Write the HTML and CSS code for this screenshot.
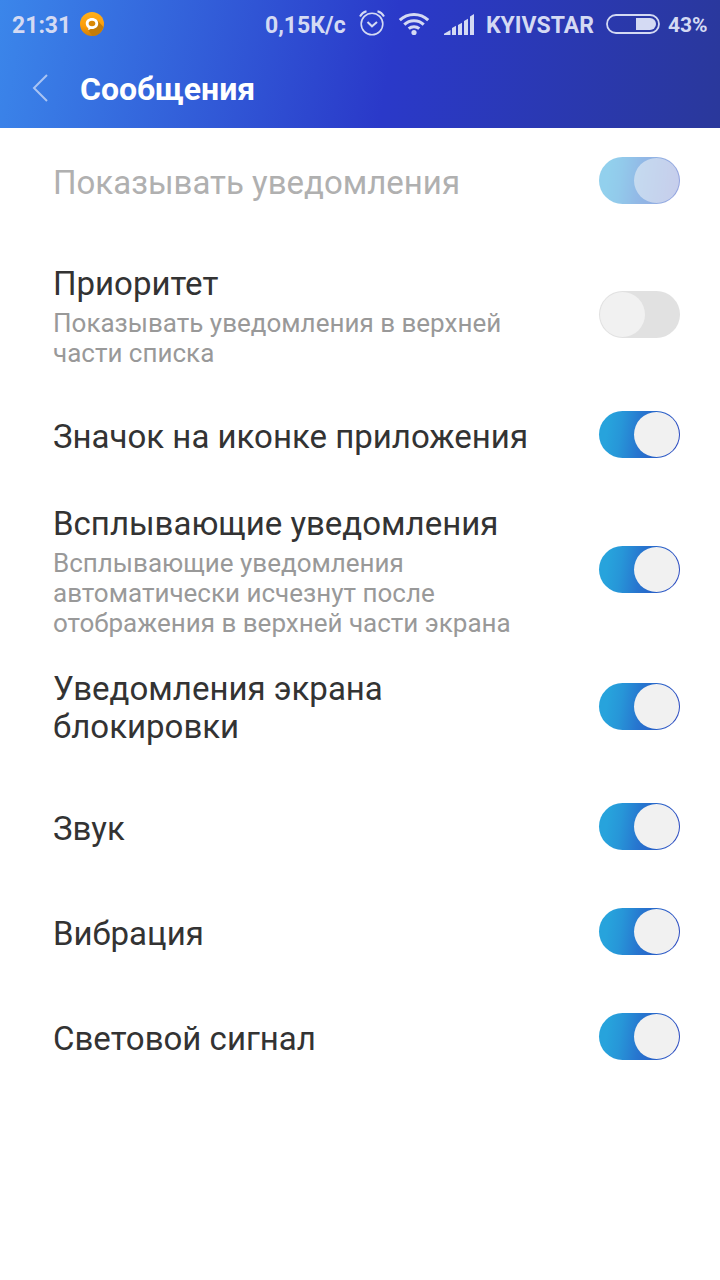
FILE: index.html
```html
<!DOCTYPE html>
<html lang="ru">
<head>
<meta charset="utf-8">
<title>Сообщения</title>
<link rel="stylesheet" href="styles.css">
</head>
<body>
<header class="header">
    <div class="status-bar">
        <span class="time">21:31</span>
        <svg class="app-icon" width="24" height="24" viewBox="0 0 24 24">
            <defs>
                <linearGradient id="orange" x1="0" y1="0" x2="0" y2="1">
                    <stop offset="0" stop-color="#ffb01c"/>
                    <stop offset="0.6" stop-color="#fb9c0a"/>
                    <stop offset="1" stop-color="#d07f06"/>
                </linearGradient>
            </defs>
            <circle cx="12" cy="12" r="12" fill="url(#orange)"/>
            <path d="M17 8l6.500 7a12 12 0 0 1-11 9L8 18z" fill="#c47c08"/>
            <path d="M12 6c3.600 0 6.200 2.300 6.200 5.500S15.600 17 12 17h-1.500L8.300 18.300V16C6.600 15 5.800 13.400 5.800 11.500 5.800 8.300 8.400 6 12 6z" fill="#fff"/>
            <ellipse cx="12" cy="11.500" rx="3.300" ry="2.700" fill="#d98807"/>
        </svg>
        <span class="speed">0,15К/с</span>
        <svg class="alarm" width="26" height="26" viewBox="0 0 26 26" fill="none" stroke="#d4daf3">
            <circle cx="13" cy="14" r="10.800" stroke-width="1.600"/>
            <path d="M8.500 12l4.500 4.300 5-4.300" stroke-width="2"/>
            <path d="M1 6.500C2.300 4 4.500 2 7.500 1.200M25 6.500C23.700 4 21.500 2 18.500 1.200" stroke-width="2"/>
        </svg>
        <svg class="wifi" width="32" height="24" viewBox="0 0 32 24" fill="none" stroke="#d4daf3" stroke-width="3">
            <path d="M1.800 8.200a20.500 20.500 0 0 1 28.400 0"/>
            <path d="M6.300 12.700a14 14 0 0 1 19.400 0"/>
            <path d="M10.700 16.700a8 8 0 0 1 10.600 0"/>
            <circle cx="16" cy="20.500" r="2.600" fill="#d4daf3" stroke="none"/>
        </svg>
        <svg class="signal" width="30" height="21" viewBox="0 0 30 21" fill="#d4daf3">
            <path d="M0 21v-1.200L6.500 16v5zM8 21v-7l4-2.200V21zM14 21v-10l4-2.200V21zM20 21V7l4-2.300V21zM26 21V2.500L30 0v21z"/>
        </svg>
        <span class="carrier">KYIVSTAR</span>
        <svg class="battery" width="54" height="20" viewBox="0 0 54 20">
            <rect x="1" y="1" width="52" height="18" rx="9" fill="none" stroke="#d4daf3" stroke-width="1.800"/>
            <path d="M30 4h14a6 6 0 0 1 0 12H30z" fill="#d4daf3"/>
        </svg>
        <span class="percent">43%</span>
    </div>
    <div class="title-bar">
        <svg class="back" width="16" height="28" viewBox="0 0 16 28" fill="none" stroke="#a9c4f3" stroke-width="2">
            <path d="M15 1L2 14l13 13"/>
        </svg>
        <h1 class="title">Сообщения</h1>
    </div>
</header>

<main class="settings">
    <div class="row disabled">
        <div class="text"><div class="name">Показывать уведомления</div></div>
        <div class="toggle on"></div>
    </div>
    <div class="row priority">
        <div class="text">
            <div class="name">Приоритет</div>
            <div class="summary">Показывать уведомления в верхней<br>части списка</div>
        </div>
        <div class="toggle"></div>
    </div>
    <div class="row">
        <div class="text"><div class="name">Значок на иконке приложения</div></div>
        <div class="toggle on"></div>
    </div>
    <div class="row popup">
        <div class="text">
            <div class="name">Всплывающие уведомления</div>
            <div class="summary">Всплывающие уведомления<br>автоматически исчезнут после<br>отображения в верхней части экрана</div>
        </div>
        <div class="toggle on"></div>
    </div>
    <div class="row lockscreen">
        <div class="text"><div class="name">Уведомления экрана<br>блокировки</div></div>
        <div class="toggle on"></div>
    </div>
    <div class="row">
        <div class="text"><div class="name">Звук</div></div>
        <div class="toggle on"></div>
    </div>
    <div class="row">
        <div class="text"><div class="name">Вибрация</div></div>
        <div class="toggle on"></div>
    </div>
    <div class="row">
        <div class="text"><div class="name">Световой сигнал</div></div>
        <div class="toggle on"></div>
    </div>
</main>
</body>
</html>
```
FILE: styles.css
```css
* {
    margin: 0;
    padding: 0;
    box-sizing: border-box;
}

body {
    width: 720px;
    min-height: 1280px;
    background: #fff;
    font-family: Roboto, "Noto Sans", sans-serif;
    color: #333;
}

.header {
    height: 128px;
    background: linear-gradient(100deg, #3b86ea 0%, #2a39c9 54%, #2a389b 100%);
}

.status-bar {
    display: flex;
    align-items: center;
    height: 50px;
    padding: 0 12px;
    color: #d4daf3;
    font-size: 23px;
    font-weight: 700;
    white-space: nowrap;
}

.status-bar svg {
    flex: none;
}

.time {
    width: 68px;
}

.app-icon {
    margin-top: -2px;
}

.speed {
    width: 94px;
    margin-left: 161px;
}

.alarm {
    margin-top: -4px;
}

.wifi {
    margin-left: 13px;
    margin-top: -2px;
}

.signal {
    margin-left: 14px;
    margin-top: -1px;
}

.carrier {
    width: 120px;
    margin-left: 12px;
}

.battery {
    margin-top: -2px;
}

.percent {
    margin-left: 8px;
    font-size: 21px;
}

.title-bar {
    display: flex;
    align-items: center;
    height: 78px;
    padding-left: 32px;
}

.back {
    margin-right: 32px;
    margin-top: -3px;
}

.title {
    color: #fff;
    font-size: 32px;
    font-weight: 700;
}

.row {
    display: flex;
    align-items: center;
    justify-content: space-between;
    height: 105px;
    padding: 0 40px 0 53px;
}

.priority {
    height: 135px;
    margin-top: 14px;
}

.popup {
    height: 165px;
}

.lockscreen {
    height: 109px;
    margin-bottom: 13px;
}

.text {
    padding-top: 4px;
    white-space: nowrap;
}

.lockscreen .text {
    padding-top: 2px;
}

.name {
    font-size: 33px;
    line-height: 38px;
}

.summary {
    margin-top: 5px;
    color: #999;
    font-size: 26px;
    line-height: 30px;
}

.toggle {
    flex: none;
    width: 81px;
    height: 47px;
    padding: 1px;
    border-radius: 24px;
    background: #e1e1e1;
}

.toggle::before {
    content: "";
    display: block;
    width: 45px;
    height: 45px;
    border-radius: 50%;
    background: #f1f1f1;
}

.toggle.on {
    background: linear-gradient(98deg, #27a3dc 12%, #2796d8 28%, #2776cf 50%, #2b4bc1 95%);
}

.toggle.on::before {
    margin-left: auto;
}

.disabled .name {
    color: #b0b0b0;
}

.disabled .toggle {
    opacity: 0.5;
}

/* the knob is see-through as well, the track shows under it */
.disabled .toggle::before {
    background: rgba(241, 241, 241, 0.5);
}
```
